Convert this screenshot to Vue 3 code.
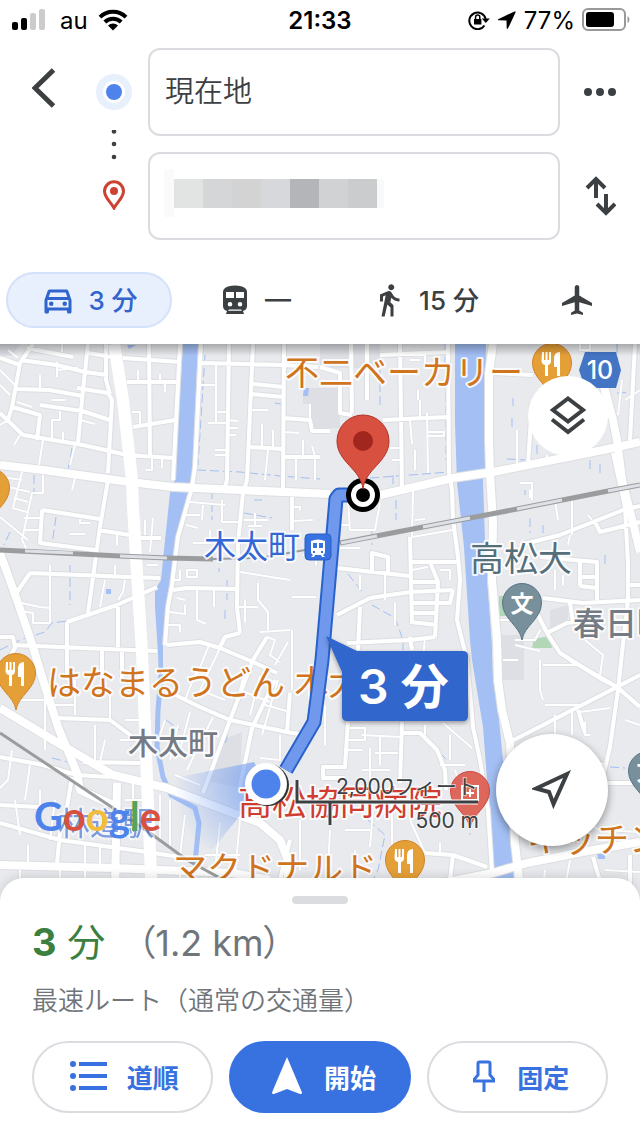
<template>
  <div class="app">
    <header class="top-panel">
      <div class="status-bar">
        <div class="status-left">
          <svg class="signal" viewBox="0 0 34 22">
            <rect x="0" y="13" width="6" height="8" rx="2" />
            <rect x="9" y="9" width="6" height="12" rx="2" />
            <rect class="off" x="18" y="4" width="6" height="17" rx="2" />
            <rect class="off" x="27" y="0" width="6" height="21" rx="2" />
          </svg>
          <span>au</span>
          <svg class="wifi" viewBox="0 0 30 22">
            <path d="M2 8.2a18.5 18.5 0 0 1 26 0" />
            <path d="M6.8 13a11.7 11.7 0 0 1 16.4 0" />
            <path class="fill" d="M15 21.5l-5-5a7.2 7.2 0 0 1 10 0z" />
          </svg>
        </div>
        <span class="clock">21:33</span>
        <div class="status-right">
          <svg class="lock" viewBox="0 0 22 20">
            <path d="M16.5 15.5A8.3 8.3 0 1 1 17.7 9" />
            <path class="fill" d="M13.8 8.5h8l-4 4.5zM6 9h7.4v5.5H6z" />
            <path class="thin" d="M7.6 9.4V7.2a2.1 2.1 0 0 1 4.2 0v2.2" />
          </svg>
          <svg class="arrow" viewBox="0 0 20 20">
            <path d="M1.2 9.2L17.6 1.4q1.4-.4.9 1L10.9 18.6q-.9 1-1.2-.3L9.5 10.5 1.6 10.3q-1.4-.3-.4-1.1z" />
          </svg>
          <span>77%</span>
          <svg class="battery" viewBox="0 0 48 24">
            <rect class="shell" x="1" y="1" width="42" height="21" rx="5" />
            <rect x="4" y="4" width="28" height="15" rx="3" />
            <path class="tip" d="M45.5 8v7q2-1 2-3.500t-2-3.500z" />
          </svg>
        </div>
      </div>

      <div class="search">
        <button class="icon-btn back" aria-label="戻る">
          <svg width="24" height="40" viewBox="0 0 24 40"><path d="M21.5 2L3 20l18.500 18" /></svg>
        </button>
        <div class="markers">
          <svg width="36" height="36" viewBox="0 0 36 36">
            <circle cx="18" cy="18" r="18" fill="#e8effd" />
            <circle cx="18" cy="18" r="11" fill="#fff" />
            <circle cx="18" cy="18" r="8" fill="#4f83ec" />
          </svg>
          <svg width="6" height="30" viewBox="0 0 6 30" fill="#3c4043">
            <circle cx="3" cy="1.5" r="2.3" />
            <circle cx="3" cy="14" r="2.3" />
            <circle cx="3" cy="27" r="2.3" />
          </svg>
          <svg width="22" height="30" viewBox="0 0 22 30">
            <path d="M11 28C8 22.500 1.500 17.500 1.500 11.300a9.500 9.500 0 0 1 19 0C20.500 17.500 14 22.500 11 28z" fill="none" stroke="#cc4334" stroke-width="3" />
            <circle cx="11" cy="11" r="4" fill="#cc4334" />
          </svg>
        </div>
        <div class="fields">
          <input class="field" type="text" value="現在地" aria-label="出発地">
          <div class="destination">
            <input class="field" type="text" aria-label="目的地">
            <div class="mosaic">
              <i v-for="c in mosaic" :key="c" :style="{ background: c }"></i>
            </div>
          </div>
        </div>
        <div class="actions">
          <button class="icon-btn" aria-label="その他">
            <svg width="32" height="8" viewBox="0 0 32 8" fill="#3c4043">
              <circle cx="4" cy="4" r="4" /><circle cx="16" cy="4" r="4" /><circle cx="28" cy="4" r="4" />
            </svg>
          </button>
          <button class="icon-btn swap" aria-label="入れ替え">
            <svg width="32" height="40" viewBox="0 0 32 40">
              <path d="M12 22V3M3 12l9-9 9 9M22 18v19M13 28l9 9 9-9" />
            </svg>
          </button>
        </div>
      </div>

      <nav class="modes">
        <button class="mode active">
          <svg width="36" height="36" viewBox="0 0 24 24">
            <path d="M18.920 6.010C18.720 5.420 18.160 5 17.500 5h-11c-.66 0-1.210.42-1.420 1.010L3 12v8c0 .55.45 1 1 1h1c.55 0 1-.45 1-1v-1h12v1c0 .55.45 1 1 1h1c.55 0 1-.45 1-1v-8l-2.080-5.990zM6.850 7h10.290l1.040 3H5.810l1.040-3zM19 17H5v-5h14v5z" />
            <circle cx="7.500" cy="14.500" r="1.500" /><circle cx="16.500" cy="14.500" r="1.500" />
          </svg>
          <span>3 分</span>
        </button>
        <button class="mode">
          <svg width="36" height="30" viewBox="-6 0 36 30">
            <path fill-rule="evenodd" d="M5 1.500Q12-.500 19 1.500 24 3 24 7v14q0 4-4 5l1 3H3l1-3q-4-1-4-5V7Q0 3 5 1.500zM3 7v6h8V7zm10 0v6h8V7zM7 17a2.300 2.300 0 1 0 0 4.600A2.300 2.300 0 0 0 7 17zm10 0a2.300 2.300 0 1 0 0 4.600 2.300 2.300 0 0 0 0-4.600zM6 24.500l-1 1.300h14l-1-1.300z" />
          </svg>
          <span>—</span>
        </button>
        <button class="mode">
          <svg width="36" height="36" viewBox="0 0 24 24">
            <path d="M13.500 5.500c1.100 0 2-.9 2-2s-.9-2-2-2-2 .9-2 2 .9 2 2 2zM9.800 8.900L7 23h2.100l1.800-8 2.100 2v6h2v-7.500l-2.100-2 .6-3C14.800 12 16.800 13 19 13v-2c-1.900 0-3.500-1-4.300-2.400l-1-1.600c-.4-.6-1-1-1.700-1-.3 0-.5.1-.8.1L6 8.300V13h2V9.600l1.800-.7" />
          </svg>
          <span>15 分</span>
        </button>
        <button class="mode" aria-label="飛行機">
          <svg width="36" height="36" viewBox="0 0 24 24">
            <path d="M22 16v-2l-8.500-5V3.500c0-.83-.67-1.500-1.500-1.500s-1.500.67-1.500 1.500V9L2 14v2l8.500-2.500V19L8 20.500V22l4-1 4 1v-1.500L13.500 19v-5.500L22 16z" />
          </svg>
        </button>
      </nav>
    </header>

    <main class="map">
      <svg class="map-canvas" viewBox="0 344 640 556" preserveAspectRatio="xMidYMin slice">
        <defs>
          <radialGradient id="beam" gradientUnits="userSpaceOnUse" cx="266" cy="784" r="92">
            <stop offset="0.2" stop-color="#6f9af0" stop-opacity="0.65" />
            <stop offset="1" stop-color="#6f9af0" stop-opacity="0" />
          </radialGradient>
          <linearGradient id="fade" x1="0" y1="0" x2="0" y2="1">
            <stop offset="0" stop-color="#000" stop-opacity="0.28" />
            <stop offset="1" stop-color="#000" stop-opacity="0" />
          </linearGradient>
        </defs>

        <rect x="0" y="344" width="640" height="556" fill="#e8eaed" />
        <path class="block" d="M303 388h17v43h-8v-11h-2v-16h-7zM320 388h20v40h-20zM500 635h24v45h-24zM550 610l18-5v18l-18 8zM222 740l20-8-2 55-30-5zM0 344h20l-8 12H0zM320 344h60v24h-60z" />
        <path class="park" d="M499 596h8v20h-8zM534 639l15-3 3 12h-20z" />

        <!-- 川と水路 -->
        <path class="water" d="M183 344h15l-6 136-2 17-7 23-7 37-4 23-5 27-4 33v40h-4l-1-27-3-46v-17l6-10 3-30 6-57 5-13z" />
        <path class="water" d="M455 344h31l-1 126-2 10 2 60 3 50 4 57 1 33 5 30 5 50 7 50 3 55 2 35h-22v-27l-5-80-5-66-11-67-2-20-6-93-4-37-3-27-2-60z" />
        <path class="stream" d="M161 675l-3 35-1 37 6 30 8 18 24 13 4 15-4 40" />
        <path class="water" d="M100 609l32-13v4l-30 11zM224 737l4-2-2 8h-4zM304 388h5l-1 8h-5zM127 345h9l-7 4zM597 853h8v6h-7zM106 589h5v5h-5z" />
        <path class="ditch" :d="ditches" />

        <!-- 道路 -->
        <path class="casing lane" :d="lanes" />
        <path class="casing street" :d="streets" />
        <path class="casing avenue" :d="avenues" />
        <path class="lane" :d="lanes" />
        <path class="street" :d="streets" />
        <path class="avenue" :d="avenues" />
        <path class="highway" d="M114 344l9 56 9 80 1 27 4 66 5 80 3 74 2 53 5 120" />

        <!-- 線路 -->
        <g class="rail">
          <path d="M0 550l120 6 47 2 46 1" />
          <path class="thin" d="M213 559l47-1 45-8" />
          <path d="M340 543l83-16 94-18 91-18 32-6" />
          <path class="gap" d="M25 551l48 2M120 556l47 2M341 543l36-7M423 527l47-9M517 509l45-9M608 491l32-6" />
          <path class="single" d="M0 733l113 75 37 25 37 27 33 18" />
        </g>

        <path fill="url(#beam)" d="M266 784l-12-22-80 16 10 60 28 12z" />

        <!-- 地名 -->
        <g class="labels">
          <text class="shop" x="285" y="385">不二ベーカリー</text>
          <text class="shop" x="47" y="695">はなまるうどん 木太</text>
          <text class="shop" x="173" y="881">マクドナルド</text>
          <text class="shop" x="527" y="852">キッチン</text>
          <text class="school" x="470" y="571">高松大</text>
          <text class="station" x="204" y="558">木太町</text>
          <text class="station faint" x="58" y="835">林道駅</text>
          <text class="town" x="128" y="754">木太町</text>
          <text class="town large" x="573" y="635">春日町</text>
          <text class="hospital" x="238" y="815">高松協同病院</text>
        </g>

        <g v-for="p in pins" :key="p.id" :transform="`translate(${p.x} ${p.y})`" :class="['pin', p.kind]">
          <path class="body" d="M0 37C-2 23-19.500 16-19.500 0a19.500 19.500 0 1 1 39 0C19.500 16 2 23 0 37z" />
          <path v-if="p.kind === 'food'" class="mark" d="M-10-11h2v8h1.500v-8h2v8H-3v-8h2v9q0 3-3 4v11h-3V2q-3.500-1-3.500-4zM2-4q0-7 6-7v24H5V4H2z" />
          <text v-else-if="p.kind === 'edu'" y="9" text-anchor="middle">文</text>
          <path v-else class="cross" d="M-8-5H8V9H-8zM0-2v8M-4 2h8" />
        </g>

        <g class="shield">
          <path d="M585 352h31l5 18-5 18h-31l-6-18z" />
          <text x="600" y="379" text-anchor="middle">10</text>
        </g>

        <!-- ルート -->
        <path class="route-edge" d="M363 495h-24l-3 4-7 81-7 80-8 62-28 48" />
        <path class="route" d="M363 495h-24l-3 4-7 81-7 80-8 62-28 48" />
        <g class="station-mark">
          <rect x="305" y="534" width="26" height="26" rx="4" />
          <path d="M311 541q7-3 14 0v11q0 2-2 3l2 2h-3l-1-2h-6l-1 2h-3l2-2q-2-1-2-3z" />
          <path class="hole" d="M313 543h4v5h-4zM319 543h4v5h-4zM313 551h2v2h-2zM321 551h2v2h-2z" />
        </g>
        <g class="target">
          <circle cx="363" cy="495" r="17" />
          <circle cx="363" cy="495" r="12" fill="#fff" />
          <circle cx="363" cy="495" r="7" />
        </g>
        <path fill="#d8503f" stroke="#b3332a" d="M363 489c-2-20-26-27-26-48a26 26 0 1 1 52 0c0 21-24 28-26 48z" />
        <circle cx="363" cy="441" r="10" fill="#a0261e" />

        <path class="callout" d="M326 636l31 15h106q5 0 5 5v60q0 5-5 5H347q-5 0-5-5v-44z" />
        <text class="callout-text" x="358" y="704">3 分</text>

        <circle cx="268" cy="785" r="21" fill="#333" />
        <circle cx="266" cy="784" r="21" fill="#fff" />
        <circle cx="266" cy="784" r="14.500" fill="#4f83ec" />

        <g class="scale">
          <path class="halo" d="M297 780v22h181M330 803v22" />
          <path d="M297 780v22h181M330 803v22" />
          <text x="336" y="794">2,000フィート</text>
          <text x="479" y="828" text-anchor="end">500 m</text>
        </g>

        <text class="logo" x="34" y="831"><tspan fill="#4f83ec">G</tspan><tspan fill="#d8503f">o</tspan><tspan fill="#f3bd3c">o</tspan><tspan fill="#4f83ec">g</tspan><tspan fill="#55a45b">l</tspan><tspan fill="#d8503f">e</tspan></text>

        <rect x="0" y="344" width="640" height="12" fill="url(#fade)" />
      </svg>

      <button class="round layers" aria-label="レイヤ">
        <svg width="36" height="40" viewBox="0 0 36 40">
          <path d="M18 2.500l15 11.500-15 11.500L3 14zM2 23.500L18 36l16-12.500" />
        </svg>
      </button>
      <button class="round locate" aria-label="現在地を表示">
        <svg width="40" height="40" viewBox="0 0 40 40">
          <path d="M35 4L4 18.500l13 3.500 4.500 12z" />
        </svg>
      </button>
    </main>

    <section class="sheet">
      <div class="handle"></div>
      <h1 class="summary">
        <span class="time"><b>3</b> 分</span>
        <span class="distance">（1.2 km）</span>
      </h1>
      <p class="note">最速ルート（通常の交通量）</p>
      <div class="buttons">
        <button class="pill">
          <svg width="48" height="32" viewBox="0 0 48 32" fill="#3871e0">
            <circle cx="6" cy="4" r="3" /><circle cx="6" cy="16" r="3" /><circle cx="6" cy="28" r="3" />
            <path d="M12 2h28v4H12zM12 14h28v4H12zM12 26h28v4H12z" />
          </svg>
          道順
        </button>
        <button class="pill primary">
          <svg width="48" height="38" viewBox="0 0 48 38" fill="#fff">
            <path d="M23 0l15 35.500q0 2-2 1.500l-13-5-13 5q-2 .5-2-1.500z" />
          </svg>
          開始
        </button>
        <button class="pill">
          <svg width="40" height="32" viewBox="0 0 40 32" fill="none" stroke="#3871e0" stroke-width="3">
            <path d="M13 3.500q0-1.500 1.500-1.500h9q1.500 0 1.500 1.500V15l3.500 4v2h-19v-2l3.500-4zM19 21v11" />
          </svg>
          固定
        </button>
      </div>
    </section>
  </div>
</template>

<script setup>
const mosaic = ['#e2e4e3', '#d5d6d7', '#d2d3d2', '#d7d8db', '#b4b5b8', '#d1d2d4', '#cbccce'];

const pins = [
  { id: 1, kind: 'food', x: 552, y: 363 },
  { id: 2, kind: 'food', x: -10, y: 488 },
  { id: 3, kind: 'food', x: 16, y: 673 },
  { id: 4, kind: 'food', x: 405, y: 860 },
  { id: 5, kind: 'edu', x: 522, y: 603 },
  { id: 6, kind: 'edu', x: 648, y: 771 },
  { id: 7, kind: 'medical', x: 470, y: 791 }
];

// 幹線道路
const avenues = [
  'M0 465L43 470 130 482 173 487 240 490 330 494',
  'M380 495L453 478 493 472 553 460 613 448 640 442',
  'M493 344L489 373V440L490 473 493 523 492 580 497 640 498 680 502 710 510 743 515 843 520 888',
  'M0 553L17 600 33 647 43 680 58 727 77 773 80 790 113 805',
  'M0 708L53 740 113 775 167 788 217 807 260 823 280 840 288 860V888',
  'M0 865L113 868 233 873 270 880',
  'M437 884L493 873 527 863 593 850 640 842',
  'M603 383L613 420 617 440 622 480 633 523 640 552',
  'M117 783L115 890'
].join('');

// 一般道
const streets = [
  'M0 358L20 365M33 344L20 363 12 407 7 423M27 348L73 357M20 360L57 365 85 372 107 375',
  'M88 344L82 400 78 443M17 389L50 390 82 396M12 407L40 415 37 440M40 405L82 411 110 420',
  'M77 388L108 393 112 400 108 473M106 344V380L110 394M0 413L23 435 83 445 127 455 173 458',
  'M123 358L180 362M127 382H178M133 427L175 420M149 344L150 458M88 353L113 357',
  'M180 344L173 480M201 344L195 467 192 488M200 363L283 365 318 367M229 344L227 480 224 490',
  'M253 344L247 480 243 493 238 543 237 607 240 633M284 344L283 490M253 384L283 387M252 394L283 397M248 447L283 449',
  'M283 418L310 420 312 431H330M283 457H320M320 367L340 373V413L352 415M351 344L352 413',
  'M367 344V400M400 344L402 490M383 420L447 417M380 355L448 352',
  'M448 344L449 473 452 490 453 520 458 557 460 580 457 620 462 640 467 660 473 727 480 760 488 810 492 873',
  'M493 373L533 375M532 403L528 464M635 344L630 440M613 453L625 507 628 563V600L622 653 618 690 610 747 603 777',
  'M520 545L560 535 593 522 623 510 640 506M595 522L600 532 640 522M543 598L583 603 640 600',
  'M540 557L597 562V600M580 562V586M580 577H597M580 586L597 588M628 585H640',
  'M537 613L547 633 560 653 603 680 617 687 640 707M547 633L567 623 580 621M570 603L573 622',
  'M510 742L617 687 640 675M570 660L617 687M578 710L585 733M607 783H640M590 780L603 777',
  'M337 568L410 576M410 537L412 623M410 562H457M412 582H437M430 562L438 582 435 637M337 615L370 598 410 592 453 590',
  'M412 603H450L453 590M412 613H438M410 622L437 625M347 643L410 640 435 637M372 573V553L388 557V575M360 607L358 650M410 637L412 650',
  'M108 480L100 527 88 613M42 510L100 519M42 510L40 543 95 550M98 530L130 535M30 573L130 577 160 578M30 573L17 592',
  'M67 622L117 605 157 587M118 607V647M67 622V680M13 645L107 649 157 651M0 637H13L15 648 8 660M138 538H161M102 650V680M122 650V680',
  'M192 488L178 537 172 585 168 607 165 645M292 497V530M173 590L187 588 237 589M240 633L225 637 220 647',
  'M167 645L200 642 220 648 253 662 277 673M267 637L253 660 230 720 203 793M165 690L200 707 230 720 287 732 305 735',
  'M275 680L252 728 240 787M290 693L287 732M0 757L43 765 77 775 110 777M57 718L110 720 137 740M83 762L140 763',
  'M60 833L57 863M0 823L60 840 147 852 180 857M72 777L67 807M290 840L278 888',
  'M348 722L345 767H323V778H345M402 722L400 783M403 733H420L437 750 445 770 446 790M425 853L453 855 487 867M453 855L450 880',
  'M593 857L602 888M630 855V888M0 805L40 807'
].join('');

// 路地
const lanes = [
  'M0 370L15 385M8 350L18 358M0 385L10 395M17 402L32 407M0 425L8 420M20 435L14 445M40 375V390H20M57 362V377',
  'M57 365V370L78 368M62 344V352M60 411V420H52V440M52 400H65M80 420L95 424M63 443V432M43 440L39 465',
  'M138 370V380M160 374V382M165 382V392M132 412H140V426M146 470H152V458M162 458V468M75 445L70 465',
  'M216 365V423M200 385H215M215 412H227M208 423H227M227 420L238 421M227 428H238M227 435H236M215 450H227M215 455H227M262 424V447M250 410H268',
  'M273 430V447M284 432L299 433M303 440V457M312 446L315 456V480M296 457V480M268 450L265 480M310 404V420',
  'M400 355H425V366M410 360H420M418 400V390M410 420L412 444M427 413L428 473M420 400V418M427 432H444V436H427M402 448H390M402 460H392M415 450V470',
  'M517 430V465M547 455V465M580 344V350H590V344M622 380L618 415M640 390L625 400',
  'M22 472L13 508M2 477L22 480M0 485L30 492M14 498L28 502M12 508L27 512M43 475V493H32L22 540M75 478L72 490M24 518H42M24 530H42M80 519V523H90M70 534H85M22 540L28 552M117 535V545M0 517L28 540',
  'M153 518L150 552M145 520V535M147 565H158M115 565V575M50 565V623H33V613L20 611M17 602L40 607 50 608M125 580L123 592 118 600M105 580L100 607',
  'M190 502L225 505M185 515H200M186 525L198 528M203 505L202 520M193 543H210V530M222 500V522M222 522H240M244 520H268M248 526H262M255 513V527M292 507H300V510M292 521L313 520M180 570V580H174M187 570H197V577H187ZM197 588V620L206 624M214 590V607',
  'M177 598L185 600M170 612L185 614V605M168 625H180V632M240 572L290 580M258 583V600L268 612V630M292 630L292 690M260 632L290 630M237 607H258M245 600V622M303 555H316V565M292 597H316M220 648L200 690M209 645L195 680M267 637L275 640 270 655 280 662M288 642L275 665',
  'M348 500L350 530H375L380 503M413 490L412 537 453 530M337 525H349M340 548H360M360 575V590M385 575V600M415 520L425 519M412 570L428 567M440 570H450V580M425 637L423 660M395 603V625',
  'M520 483H532V500M530 490V498M555 500L558 520M572 500V535M588 515L592 520M570 535L568 545M500 620H520M503 660H518M515 640H535L540 630M515 645L540 651M563 575V585M555 570V590M585 640L603 655 600 675M543 665H580',
  'M345 740H365V728H350M345 750H362M380 737V765M375 753H398M362 735L400 737M362 770H390M370 748V790M443 723L472 748M450 735V760M440 765H465M325 705V745M425 735V725M455 770L460 785M373 810L370 847M370 830H345M392 800V845M410 820L425 853M440 843V853M330 830L328 870M355 850V890',
  'M540 660V690L543 700M572 710V735M545 705H580M585 722V735H590M555 715V735M580 712L610 708M625 720L640 725M592 760L606 765M580 820L600 830 640 832M545 870L543 888M570 860L565 888M605 870L640 872',
  'M12 750L8 780 0 788M30 765L25 800M45 690V750M20 700H45M75 680V715M50 705H75M110 690V720L130 735M40 790V830M55 800L50 840M15 800L20 835M28 845V863M95 725V760M105 740L100 762',
  'M125 720H145M120 740H140M150 740H165M165 720L160 735M178 725L170 760M190 712L180 750M213 717L187 770M197 670L185 700M200 690L225 700M240 690L270 702M245 670L235 710M260 676L250 715M278 680L262 735M265 705L290 712M280 735V760L260 758M175 775L200 785',
  'M133 783V805M125 800H150M85 845V865M100 847V865M160 795V840M170 800V850M185 815L180 855M220 823L215 870M240 820L235 873M205 855H240M300 820V870M20 870V890M60 868V890M85 870V885M180 875V890'
].join('');

// 用水路
const ditches = [
  'M197 470L240 472 280 476 320 479M178 365L173 480M205 355L198 465M275 403L281 404M72 448L68 470M212 490V520M34 475V495',
  'M56 517L52 545M70 565V605M10 532L4 545M0 650L20 640 45 632 52 623 75 620M244 513L272 518M254 500H262M219 555V572M227 580V600M225 610V620',
  'M366 344V366M380 370V408M370 478L450 472M393 475V485M446 380V460M445 344V366M513 398V406M512 418V428M507 459L525 460M537 445V456M590 460V472M600 464V475',
  'M353 490V500M396 500V520M348 574L363 593M372 530V545M372 605L395 618 403 640V650M530 518V533M543 525V533M525 490V495M605 555V565',
  'M440 753L449 762M368 820L385 835 378 870 374 878M470 820V835M610 767L625 768M620 832H640M166 720L180 730M52 758L75 764M617 344V360M617 393L640 392'
].join('');
</script>

<style>
body {
  margin: 0;
  background: #fff;
}
</style>

<style scoped>
.app {
  font-family: Inter, "Noto Sans CJK JP", sans-serif;
  color: #3c4043;
  background: #fff;
}

button {
  font: inherit;
  color: inherit;
  padding: 0;
  border: 0;
  background: none;
  cursor: pointer;
}

svg {
  display: block;
  flex: none;
}

/* ステータスバー */
.status-bar {
  height: 40px;
  padding: 0 12px;
  display: grid;
  grid-template-columns: 1fr auto 1fr;
  align-items: center;
  color: #000;
  font-size: 24px;
}

.status-left,
.status-right {
  display: flex;
  align-items: center;
}

.status-left {
  gap: 14px;
}

.status-right {
  justify-content: flex-end;
  gap: 7px;
}

.clock {
  font-weight: 600;
}

.signal {
  width: 34px;
  height: 22px;
}

.signal .off {
  fill: #ccc;
}

.wifi {
  width: 30px;
  height: 22px;
  margin-left: -4px;
}

.wifi path {
  fill: none;
  stroke: #000;
  stroke-width: 4;
}

.wifi .fill {
  fill: #000;
  stroke: none;
}

.lock {
  width: 22px;
  height: 20px;
}

.lock path {
  fill: none;
  stroke: #000;
  stroke-width: 2;
}

.lock .fill {
  fill: #000;
  stroke: none;
}

.lock .thin {
  stroke-width: 1.5;
}

.arrow {
  width: 20px;
  height: 20px;
}

.battery {
  width: 48px;
  height: 24px;
  margin-right: -2px;
}

.battery .shell {
  fill: none;
  stroke: #999;
  stroke-width: 2;
}

.battery .tip {
  fill: #999;
}

/* 出発地・目的地 */
.search {
  display: grid;
  grid-template-columns: 88px 52px 1fr 80px;
  padding-top: 8px;
}

.icon-btn {
  height: 80px;
  display: flex;
  align-items: center;
  justify-content: center;
}

.back path,
.swap path {
  fill: none;
  stroke: #3c4043;
  stroke-width: 5;
}

.swap path {
  stroke-width: 4;
}

.markers {
  display: flex;
  flex-direction: column;
  align-items: center;
  padding-top: 26px;
  gap: 20px;
}

.fields {
  margin-left: 8px;
  display: flex;
  flex-direction: column;
  gap: 16px;
}

.field {
  display: block;
  box-sizing: border-box;
  width: 100%;
  height: 88px;
  padding: 0 15px 6px;
  border: 2px solid #dadce0;
  border-radius: 12px;
  background: #fff;
  color: #3c4043;
  font-family: inherit;
  font-size: 29px;
  font-weight: 350;
  outline: none;
}

.destination {
  position: relative;
}

.mosaic {
  position: absolute;
  left: 16px;
  top: 17px;
  display: flex;
  align-items: center;
  height: 48px;
  border-left: 10px solid #fafafa;
}

.mosaic i {
  width: 29px;
  height: 29px;
}

.mosaic::after {
  content: "";
  width: 7px;
  height: 29px;
  background: #f8faf9;
}

.actions {
  display: flex;
  flex-direction: column;
  gap: 16px;
}

.actions .icon-btn {
  height: 88px;
}

/* 移動手段 */
.modes {
  display: grid;
  grid-template-columns: 166fr 164fr 178fr 126fr;
  padding: 32px 0 16px 6px;
}

.mode {
  height: 56px;
  display: flex;
  align-items: center;
  justify-content: center;
  gap: 12px;
  font-size: 26px;
  font-weight: 500;
  border-radius: 28px;
}

.mode span {
  padding-bottom: 4px;
}

.mode svg {
  fill: #3c4043;
}

.mode.active {
  color: #3165ce;
  background: #e8effd;
  border: 2px solid #d3e1fa;
}

.mode.active svg {
  fill: #3165ce;
}

/* 地図 */
.map {
  position: relative;
  overflow: hidden;
}

.map-canvas {
  width: 100%;
  height: auto;
}

.block {
  fill: #dddfe5;
}

.park {
  fill: #b1d7b7;
}

.water {
  fill: #a3bff4;
}

.stream {
  fill: none;
  stroke: #a3bff4;
  stroke-width: 5;
}

.ditch {
  fill: none;
  stroke: #a3bff4;
  stroke-width: 1;
  stroke-dasharray: 9 4;
}

.lane,
.street,
.avenue,
.highway {
  fill: none;
  stroke: #fff;
  stroke-linejoin: round;
}

.lane {
  stroke-width: 2;
}

.street {
  stroke-width: 4;
}

.avenue {
  stroke-width: 8;
}

.highway {
  stroke-width: 12;
}

.casing {
  stroke: #dcdee2;
}

.casing.lane {
  stroke-width: 3;
}

.casing.street {
  stroke-width: 6;
}

.casing.avenue {
  stroke-width: 10;
}

.rail path {
  fill: none;
  stroke: #9b9c9e;
  stroke-width: 5;
}

.rail .gap {
  stroke: #dde0e6;
  stroke-width: 3;
}

.rail .thin {
  stroke-width: 2;
}

.rail .single {
  stroke-width: 3;
}

.labels text {
  font-size: 34px;
  font-weight: 400;
  stroke: #fff;
  stroke-width: 4px;
  stroke-opacity: 0.85;
  stroke-linejoin: round;
  paint-order: stroke;
}

.labels .shop {
  fill: #d0741d;
}

.labels .school {
  fill: #546e7a;
}

.labels .hospital {
  fill: #d03c30;
}

.labels .station {
  fill: #3367d6;
  font-size: 32px;
}

.labels .faint {
  opacity: 0.6;
}

.labels .town {
  fill: #757b84;
  font-size: 30px;
  font-weight: 500;
}

.labels .large {
  font-size: 32px;
}

.station-mark rect {
  fill: #3871e0;
  stroke: #2a5ec4;
}

.station-mark path {
  fill: #fff;
}

.station-mark .hole {
  fill: #3871e0;
}

.pin .mark {
  fill: #fff;
}

.pin .cross {
  fill: none;
  stroke: #fff;
  stroke-width: 2;
}

.pin text {
  fill: #fff;
  font-size: 23px;
  font-weight: 700;
}

.food .body {
  fill: #e59f37;
  stroke: #d0852c;
}

.edu .body {
  fill: #78909c;
  stroke: #5b7583;
}

.medical .body {
  fill: #de675b;
  stroke: #cc4a40;
}

.shield path {
  fill: #4474c4;
}

.shield text {
  fill: #fff;
  font-size: 25px;
  font-weight: 500;
}

.route-edge,
.route {
  fill: none;
  stroke: #2a62cc;
  stroke-width: 15;
  stroke-linejoin: round;
}

.route {
  stroke: #7099ee;
  stroke-width: 11;
}

.callout {
  fill: #3166cc;
  filter: drop-shadow(0 2px 2px rgba(0, 0, 0, 0.35));
}

.callout-text {
  fill: #fff;
  font-size: 48px;
  font-weight: 600;
}

.scale path {
  fill: none;
  stroke: #3c4043;
  stroke-width: 3;
}

.scale .halo {
  stroke: #fff;
  stroke-width: 5;
}

.scale text {
  fill: #3c4043;
  font-size: 21px;
  stroke: #fff;
  stroke-width: 2px;
  stroke-opacity: 0.6;
  paint-order: stroke;
}

.logo {
  font-family: Lato, sans-serif;
  font-size: 40px;
  font-weight: 700;
}

.round {
  position: absolute;
  display: flex;
  align-items: center;
  justify-content: center;
  border-radius: 50%;
  background: #fff;
}

.round path {
  fill: none;
  stroke: #3c4043;
  stroke-width: 4;
}

.layers {
  top: 32px;
  right: 32px;
  width: 80px;
  height: 80px;
}

.locate {
  right: 32px;
  bottom: 54px;
  width: 112px;
  height: 112px;
  box-shadow: 0 3px 8px rgba(0, 0, 0, 0.4);
}

/* 下部パネル */
.sheet {
  position: relative;
  margin-top: -22px;
  padding: 18px 32px 24px;
  border-radius: 24px 24px 0 0;
  background: #fff;
  box-shadow: 0 -2px 10px rgba(0, 0, 0, 0.12);
}

.handle {
  width: 56px;
  height: 8px;
  margin: 0 auto;
  border-radius: 4px;
  background: #dadce0;
}

.summary {
  display: flex;
  align-items: baseline;
  margin: 14px 0 0;
  font-size: 38px;
  font-weight: 400;
  line-height: 48px;
}

.time {
  color: #3c8040;
}

.time b {
  font-weight: 700;
}

.distance {
  margin-left: 32px;
  color: #70757a;
  font-size: 36px;
  font-feature-settings: "palt";
}

.note {
  margin: 18px 0 0;
  color: #70757a;
  font-size: 26px;
  font-weight: 350;
  line-height: 32px;
}

.buttons {
  display: flex;
  gap: 16px;
  margin-top: 24px;
}

.pill {
  flex: 1;
  height: 72px;
  display: flex;
  align-items: center;
  justify-content: center;
  gap: 12px;
  padding-bottom: 2px;
  border: 2px solid #dadce0;
  border-radius: 36px;
  color: #3871e0;
  font-size: 26px;
  font-weight: 600;
}

.pill.primary {
  border-color: #3871e0;
  background: #3871e0;
  color: #fff;
}
</style>
